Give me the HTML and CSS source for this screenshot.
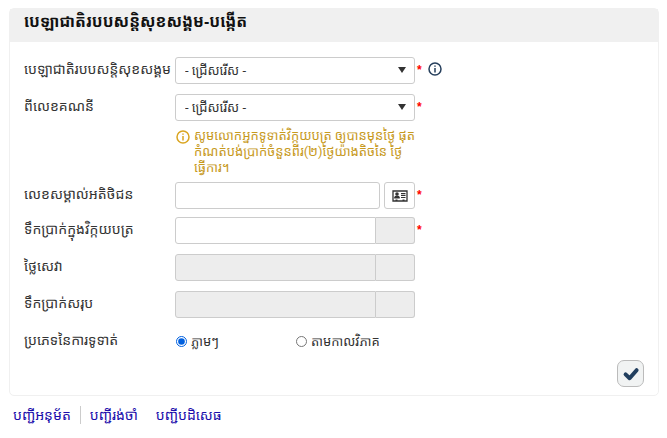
FILE: index.html
```html
<!DOCTYPE html>
<html lang="km">

<head>
    <meta charset="UTF-8">
    <meta name="viewport" content="width=device-width, initial-scale=1.0">
    <title>បេឡាជាតិរបបសន្តិសុខសង្គម</title>
    <link rel="stylesheet" href="styles.css">
</head>

<body>
    <form class="card">
        <h1 class="card-title">បេឡាជាតិរបបសន្តិសុខសង្គម-បង្កើត</h1>

        <div class="card-body">
            <div class="row">
                <label class="label" for="fund">បេឡាជាតិរបបសន្តិសុខសង្គម</label>
                <div class="field select-box">
                    <select id="fund">
                        <option>- ជ្រើសរើស -</option>
                    </select>
                </div>
                <span class="required">*</span>
                <svg class="info" viewBox="0 0 14 14">
                    <circle cx="7" cy="7" r="6" />
                    <path d="M7 6v4.5M7 3.4v1.4" />
                </svg>
            </div>

            <div class="row">
                <label class="label" for="account">ពីលេខគណនី</label>
                <div class="field select-box">
                    <select id="account">
                        <option>- ជ្រើសរើស -</option>
                    </select>
                </div>
                <span class="required">*</span>
            </div>

            <div class="note">
                <svg class="info" viewBox="0 0 14 14">
                    <circle cx="7" cy="7" r="6" />
                    <path d="M7 6v4.5M7 3.4v1.4" />
                </svg>
                <p>សូមលោកអ្នកទូទាត់វិក្កយបត្រ ឲ្យបានមុនថ្ងៃ ផុត<br>កំណត់បង់ប្រាក់ចំនួនពីរ(២)ថ្ងៃយ៉ាងតិចនៃ ថ្ងៃ<br>ធ្វើការ។</p>
            </div>

            <div class="row customer-row">
                <label class="label" for="customer">លេខសម្គាល់អតិថិជន</label>
                <div class="field with-button">
                    <input type="text" id="customer">
                    <button type="button" class="lookup" aria-label="លេខសម្គាល់អតិថិជន">
                        <svg viewBox="0 0 16 12">
                            <path class="frame" d="M1 1h14v10H1z" />
                            <circle cx="5" cy="4" r="1.8" />
                            <path d="M2.2 8.5V7.2Q2.4 5.4 5 5.4T7.8 7.2v1.3z" />
                            <path d="M9 3h4.5v1.2H9zM9 5h4.5v1H9zM9 7h4.5v1H9zM3.5 9.5h2V11h-2zM10.5 9.5h2V11h-2z" />
                        </svg>
                    </button>
                </div>
                <span class="required">*</span>
            </div>

            <div class="row">
                <label class="label" for="amount">ទឹកប្រាក់ក្នុងវិក្កយបត្រ</label>
                <div class="field group">
                    <input type="text" id="amount">
                    <span class="currency"></span>
                </div>
                <span class="required">*</span>
            </div>

            <div class="row">
                <label class="label" for="fee">ថ្លៃសេវា</label>
                <div class="field group">
                    <input type="text" id="fee" disabled>
                    <span class="currency"></span>
                </div>
            </div>

            <div class="row">
                <label class="label" for="total">ទឹកប្រាក់សរុប</label>
                <div class="field group">
                    <input type="text" id="total" disabled>
                    <span class="currency"></span>
                </div>
            </div>

            <div class="row" role="radiogroup" aria-labelledby="payType">
                <span class="label" id="payType">ប្រភេទនៃការទូទាត់</span>
                <div class="field radios">
                    <label><input type="radio" name="payType" checked>ភ្លាមៗ</label>
                    <label><input type="radio" name="payType">តាមកាលវិភាគ</label>
                </div>
            </div>

            <div class="actions">
                <button type="submit" class="submit" aria-label="បង្កើត">
                    <svg viewBox="0 0 18 16">
                        <path d="M3.6 8.4l4 3.8 7-8" />
                    </svg>
                </button>
            </div>
        </div>
    </form>

    <nav class="links">
        <a href="#approved">បញ្ជីអនុម័ត</a>
        <a href="#pending">បញ្ជីរង់ចាំ</a>
        <a href="#rejected">បញ្ជីបដិសេធ</a>
    </nav>
</body>

</html>
```
FILE: styles.css
```css
* {
    box-sizing: border-box;
}

body {
    margin: 8px;
    font-family: Roboto, "Khmer OS Battambang", "Noto Sans Khmer", "DejaVu Sans", sans-serif;
    font-size: 13px;
    line-height: 16px;
    color: #333;
    background: #fff;
}

input, select, button {
    font: inherit;
    color: inherit;
}

.card {
    margin: 0 0 0 1px;
    border: 1px solid #f0f0f0;
    border-radius: 5px;
}

.card-title {
    margin: 0;
    padding: 0 14px;
    height: 33px;
    font-family: "Liberation Sans", "Khmer OS Battambang", "Noto Sans Khmer", "DejaVu Sans", sans-serif;
    font-size: 16px;
    line-height: 26px;
    color: #111;
    background: #f0f0f0;
    white-space: nowrap;
}

.card-body {
    display: flex;
    flex-direction: column;
    gap: 10px;
    padding: 15px 14px 8px;
}

.row {
    display: flex;
    height: 27px;
}

.customer-row {
    margin-bottom: -2px;
}

.label {
    flex: 0 0 151px;
    font-size: 14px;
    line-height: 24px;
    white-space: nowrap;
}

.field {
    display: flex;
    flex: 0 0 240px;
}

.field input[type="text"],
.field select {
    flex: 1;
    min-width: 0;
    padding: 0 9px;
    border: 1px solid #ccc;
    border-radius: 3px;
    background: #fff;
}

.select-box {
    position: relative;
}

.field select {
    appearance: none;
}

.select-box::after {
    content: "";
    position: absolute;
    top: 10px;
    right: 9px;
    border: 4px solid transparent;
    border-top: 6px solid #333;
    border-bottom: 0;
}

.required {
    width: 6px;
    margin-left: 2px;
    font-family: "Liberation Sans", sans-serif;
    font-size: 12px;
    font-weight: bold;
    line-height: 26px;
    color: #f00;
}

.info {
    flex: none;
    width: 14px;
    height: 14px;
    fill: none;
    stroke: #263f5c;
    stroke-width: 1.5;
}

.row .info {
    margin: 5px 0 0 5px;
}

.note {
    display: flex;
    gap: 4px;
    margin: -3px 0 -4px 152px;
    color: #c79a1e;
    white-space: nowrap;
}

.note .info {
    margin-top: 2px;
    stroke: #daa520;
}

.note p {
    margin: 0;
}

.with-button {
    gap: 4px;
}

.lookup {
    display: grid;
    place-items: center;
    width: 31px;
    padding: 0;
    border: 1px solid #ccc;
    border-radius: 3px;
    background: #fff;
}

.lookup svg {
    width: 16px;
    height: 12px;
    fill: #333;
}

.lookup .frame {
    fill: none;
    stroke: #333;
    stroke-width: 1.3;
}

.group input[type="text"] {
    border-radius: 3px 0 0 3px;
}

.field input:disabled,
.currency {
    background: #ededed;
}

.currency {
    width: 39px;
    border: 1px solid #ccc;
    border-left: 0;
    border-radius: 0 3px 3px 0;
}

.radios label {
    display: flex;
    flex: 0 0 120px;
    align-items: center;
    gap: 4px;
    white-space: nowrap;
}

.radios input {
    width: 11px;
    height: 11px;
    margin: 0 0 0 1px;
    accent-color: #0060df;
}

.actions {
    display: flex;
    justify-content: flex-end;
    margin-top: -5px;
}

.submit {
    display: grid;
    place-items: center;
    width: 27px;
    height: 27px;
    padding: 0;
    border: 1px solid #bbb;
    border-radius: 7px;
    background: #f1f3f3;
}

.submit svg {
    width: 18px;
    height: 16px;
    fill: none;
    stroke: #213e5e;
    stroke-width: 4;
    stroke-linecap: round;
    stroke-linejoin: round;
}

.links {
    display: flex;
    margin: 10px 0 0 5px;
    font-size: 14px;
    line-height: 18px;
    white-space: nowrap;
}

.links a {
    padding: 0 9px;
    color: #1a0dab;
    text-decoration: none;
}

.links a:first-child {
    padding-left: 0;
    border-right: 1px solid #ccc;
}
```
